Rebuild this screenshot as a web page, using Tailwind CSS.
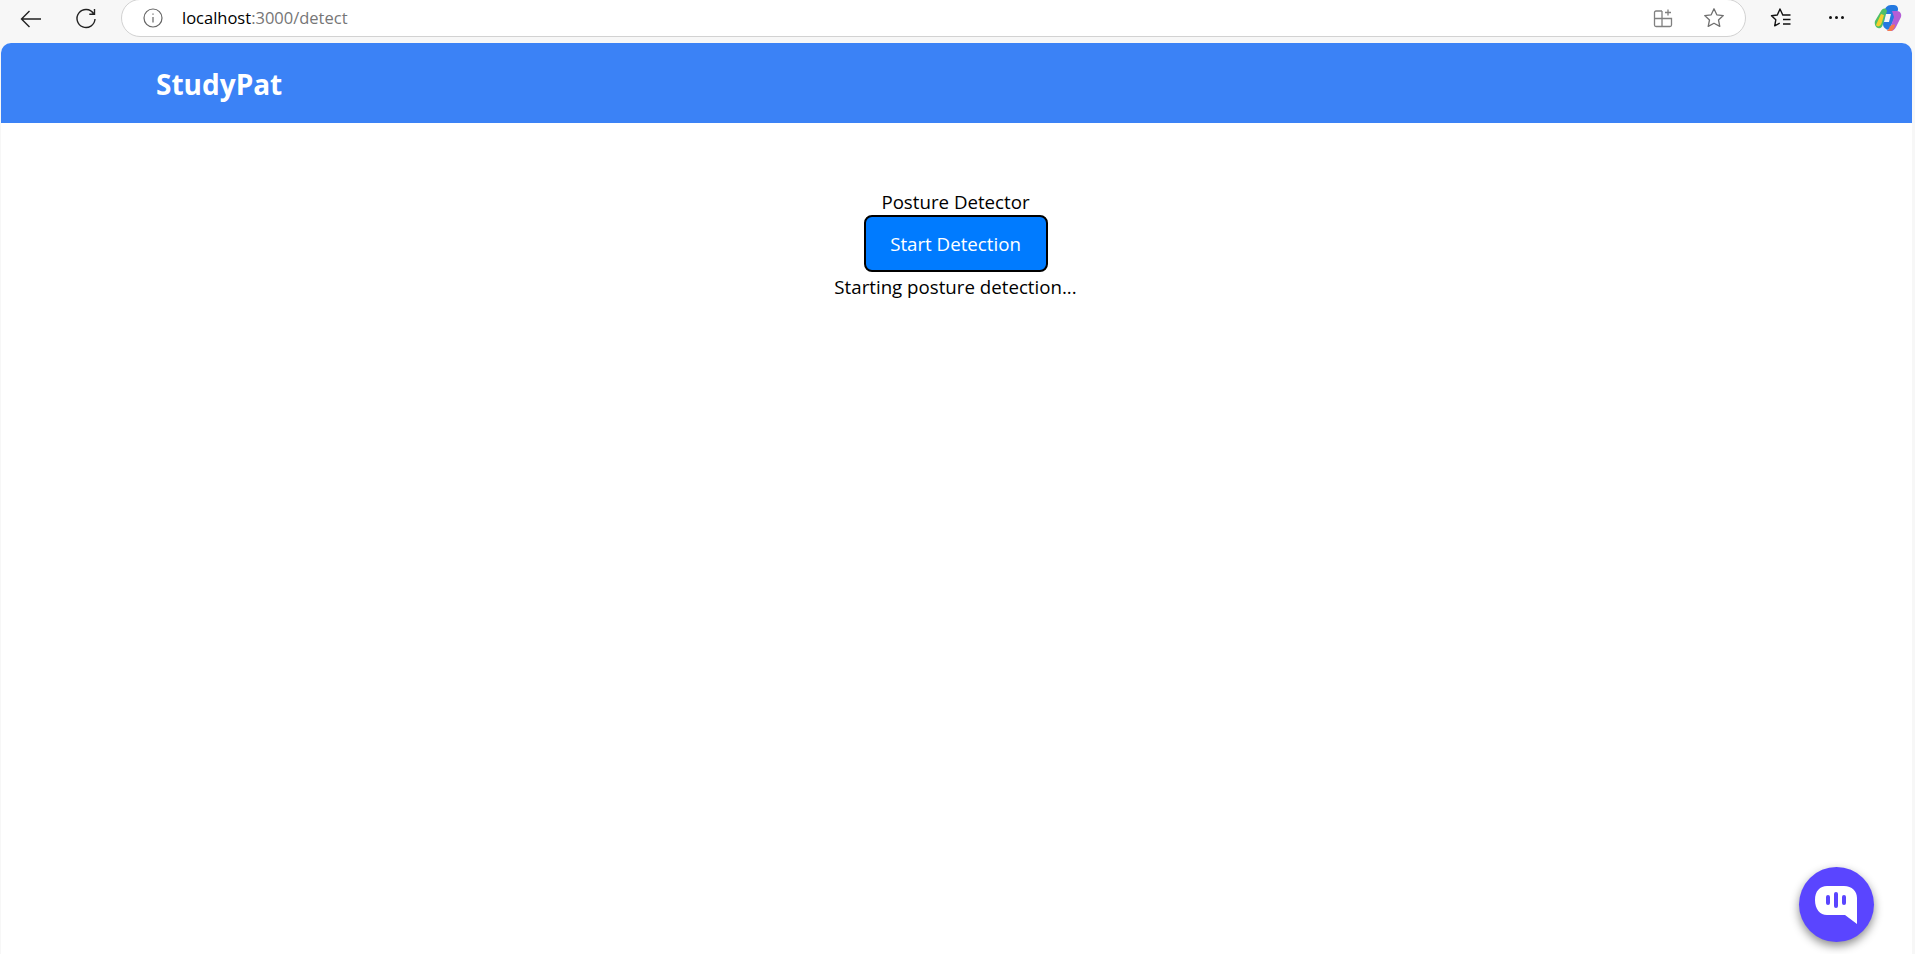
<!DOCTYPE html>
<html lang="en">

<head>
  <meta charset="UTF-8">
  <meta name="viewport" content="width=device-width, initial-scale=1.0">
  <title>StudyPat</title>
  <script src="https://cdn.jsdelivr.net/npm/@tailwindcss/browser@4"></script>
</head>

<body class="w-screen h-screen overflow-hidden bg-[#f7f7f7] font-['Open_Sans',sans-serif]">
  <div class="h-full flex flex-col">

    <!-- browser toolbar -->
    <div class="h-[43px] flex items-start shrink-0">
      <div class="w-[121px] h-[37px] flex items-center shrink-0">
        <svg class="ml-[20px]" width="22" height="18" viewBox="0 0 22 18" fill="none" stroke="#222" stroke-width="1.4"><path d="M21 9H1.5M9.500 1 1.500 9l8 8" /></svg>
        <svg class="ml-[33px]" width="22" height="22" viewBox="0 0 22 22" fill="none" stroke="#222" stroke-width="1.4"><path d="M18.500 5.500A9 9 0 1 0 20 11M19.500 1v5.200h-5.200" /></svg>
      </div>
      <div class="w-[1625px] h-[38px] -mt-px bg-white rounded-[19px] border border-[#d2d2d2] flex items-center shrink-0">
        <svg class="ml-[21px]" width="20" height="20" viewBox="0 0 20 20" fill="none" stroke="#666" stroke-width="1.2"><circle cx="10" cy="10" r="9" /><path d="M10 9v5.500M10 5.500v1.200" /></svg>
        <div class="ml-[19px] text-[16.500px] text-[#767676]"><span class="text-black">localhost</span>:3000/detect</div>
        <svg class="ml-auto" width="20" height="20" viewBox="0 0 20 20" fill="none" stroke="#808080" stroke-width="1.3"><path d="M9 3H3a1.500 1.500 0 0 0-1.500 1.500V17A1.500 1.500 0 0 0 3 18.500h14a1.500 1.500 0 0 0 1.500-1.500v-6.500H1.500M9 3v15.500M15 1.500v6M12 4.500h6" /></svg>
        <svg class="ml-[30px] mr-[20px]" width="22" height="22" viewBox="0 0 22 22" fill="none" stroke="#707070" stroke-width="1.3"><path d="m11 1.800 2.800 6 6.500.8-4.800 4.400 1.300 6.400-5.800-3.200-5.800 3.200 1.300-6.400L1.700 8.600l6.500-.8z" stroke-linejoin="round" /></svg>
      </div>
      <svg class="ml-[24px] mt-[7px] shrink-0" width="22" height="22" viewBox="0 0 22 22" fill="none" stroke="#111" stroke-width="1.4"><path d="M13 8.500 10 2 7.300 8 1.500 8.800l4.300 4-1.100 6 5-2.600M12.500 8h8M13 12.500h7.500M13 17h7.500" stroke-linejoin="round" /></svg>
      <div class="ml-[37px] mt-[16px] flex gap-[3px] shrink-0">
        <div class="w-[3px] h-[3px] rounded-full bg-[#111]"></div>
        <div class="w-[3px] h-[3px] rounded-full bg-[#111]"></div>
        <div class="w-[3px] h-[3px] rounded-full bg-[#111]"></div>
      </div>
      <svg class="ml-[30px] mt-[4px] shrink-0" width="28" height="28" viewBox="0 0 28 28">
        <path d="M10 8c1-4 3-7 7-7h3c3 0 4.500 3 4 5l-8 18c-1 2-3 2-4 1-2-1-3-3-3-5z" fill="#2479e0" />
        <path d="M1 17 7 7c1-2 3-3 5-2l1 2-4 13c-1 4-3 5-5 4-2 0-4-4-3-7z" fill="#4fbf67" />
        <path d="M2 21 7 10l3 1-2 7c-1 4-4 6-6 3z" fill="#f4cf2e" />
        <path d="M18 7h5c3 0 5 3 4 6l-5 10c-1 2-3 4-5 4h-4c2-1 3-3 4-5l3-9z" fill="#b45ed6" />
        <path d="M16 22c2-1 4-2 5-1 0 2-2 6-4 6h-4c1-1 2-2 3-5z" fill="#f57a4c" />
        <path d="M12 10h5l-2 8h-5z" fill="#f7f7f7" />
      </svg>
    </div>

    <!-- page -->
    <div class="relative flex-1 ml-px mr-[3px] bg-white rounded-t-[10px] overflow-hidden">
      <nav class="h-[80px] bg-[#3b82f6] flex items-center pl-[155px] pt-[2px]">
        <div class="text-[28px] font-bold text-white">StudyPat</div>
      </nav>

      <div class="pt-[69px] pr-[2px] flex flex-col items-center text-[18.700px] leading-[20px] text-black">
        <div>Posture Detector</div>
        <button class="w-[184px] h-[57px] mt-[3px] bg-[#007bff] border-2 border-black rounded-[8px] text-white">Start Detection</button>
        <div class="mt-[5px]">Starting posture detection...</div>
      </div>

      <!-- chat widget -->
      <div class="absolute right-[38px] bottom-[12px] w-[75px] h-[75px] rounded-full bg-[#5a45ff] shadow-[0_4px_10px_rgba(0,0,0,0.45)] flex items-center justify-center pr-[2px]">
        <svg width="44" height="40" viewBox="0 0 44 40">
          <path d="M13 1h17c8 0 13 5 13 12v26l-12-9H13C6 30 1 24 1 15S6 1 13 1z" fill="#fff" />
          <rect x="12" y="10" width="4" height="10" rx="2" fill="#5a45ff" />
          <rect x="20" y="7" width="4" height="16" rx="2" fill="#5a45ff" />
          <rect x="28" y="10" width="4" height="10" rx="2" fill="#5a45ff" />
        </svg>
      </div>
    </div>
  </div>
</body>

</html>
